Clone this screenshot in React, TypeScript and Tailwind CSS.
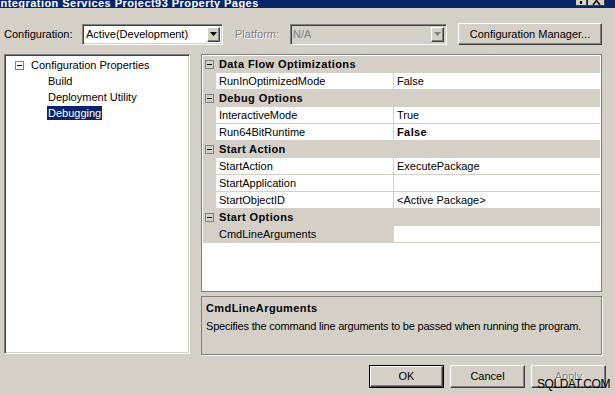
import React from 'react'

const raised =
  'border border-t-white border-l-white border-b-[#404040] border-r-[#404040] shadow-[inset_-1px_-1px_0_#808080]'
const sunken =
  'border border-t-[#808080] border-l-[#808080] border-b-white border-r-white shadow-[inset_1px_1px_0_#404040,inset_-1px_-1px_0_#d4d0c8]'

type Row = { name: string; value: string; bold?: boolean; selected?: boolean }
type Group = { title: string; rows: Row[] }

const groups: Group[] = [
  { title: 'Data Flow Optimizations', rows: [{ name: 'RunInOptimizedMode', value: 'False' }] },
  {
    title: 'Debug Options',
    rows: [
      { name: 'InteractiveMode', value: 'True' },
      { name: 'Run64BitRuntime', value: 'False', bold: true },
    ],
  },
  {
    title: 'Start Action',
    rows: [
      { name: 'StartAction', value: 'ExecutePackage' },
      { name: 'StartApplication', value: '' },
      { name: 'StartObjectID', value: '<Active Package>' },
    ],
  },
  { title: 'Start Options', rows: [{ name: 'CmdLineArguments', value: '', selected: true }] },
]

const MinusBox = ({ white }: { white?: boolean }) => (
  <span
    className={`w-[9px] h-[9px] border border-[#808080] flex items-center justify-center shrink-0 ${
      white ? 'bg-white' : ''
    }`}
  >
    <span className="w-[5px] h-[1px] bg-black" />
  </span>
)

const DropArrow = ({ disabled }: { disabled?: boolean }) => (
  <div className={`w-[13px] h-[15px] bg-[#d4d0c8] flex items-center justify-center ${raised}`}>
    <svg width="7" height="4" viewBox="0 0 7 4">
      <path d="M0 0H7L3.5 4Z" fill={disabled ? '#808080' : '#000'} />
    </svg>
  </div>
)

const Button = ({ label, isDefault, disabled }: { label: string; isDefault?: boolean; disabled?: boolean }) => (
  <div className={`w-[75px] h-[23px] ${isDefault ? 'border border-black' : ''}`}>
    <div
      className={`w-full h-full flex items-center justify-center ${raised} ${
        disabled ? 'text-[#808080] [text-shadow:1px_1px_0_#fff]' : 'text-black'
      }`}
    >
      {label}
    </div>
  </div>
)

export default function App() {
  return (
    <div className="w-[615px] h-[395px] bg-[#d4d0c8] overflow-hidden flex flex-col relative text-[11px] leading-none text-black font-['Liberation_Sans',Arial,sans-serif]">
      {/* title bar, mostly cut off */}
      <div className="h-[8px] bg-[#0a246a] overflow-hidden relative shrink-0">
        <div className="-mt-[2px] -ml-[3px] text-white font-bold text-[11px] leading-[11px] tracking-[0.45px] whitespace-nowrap">
          Integration Services Project93 Property Pages
        </div>
        <div className="absolute top-0 left-[576px] w-[11px] h-[6px] bg-[#d4d0c8] border-r border-b border-[#404040] flex justify-center">
          <span className="w-[2px] h-[3px] bg-black mt-[1px]" />
        </div>
        <div className="absolute top-0 left-[588px] w-[17px] h-[6px] bg-[#d4d0c8] border-r border-b border-[#404040] flex justify-center">
          <svg width="9" height="5" viewBox="0 0 9 5">
            <path d="M1 5L4.5 0.5L8 5" stroke="#000" strokeWidth="1.6" fill="none" />
          </svg>
        </div>
      </div>

      {/* configuration row */}
      <div className="mt-[15px] h-[22px] flex items-center shrink-0">
        <span className="ml-[4px] w-[78px]">Configuration:</span>
        <div className={`w-[141px] h-[21px] bg-white flex items-center pl-[3px] pr-[2px] ${sunken}`}>
          <span className="flex-1">Active(Development)</span>
          <DropArrow />
        </div>
        <span className="ml-[12px] w-[55px] text-[#808080] [text-shadow:1px_1px_0_#fff]">Platform:</span>
        <div className={`w-[157px] h-[21px] bg-[#d4d0c8] flex items-center pl-[2px] pr-[2px] ${sunken}`}>
          <span className="flex-1 text-[#808080]">N/A</span>
          <DropArrow disabled />
        </div>
        <div className={`ml-[11px] w-[144px] h-[22px] flex items-center justify-center ${raised}`}>
          Configuration Manager...
        </div>
      </div>

      {/* main area */}
      <div className="mt-[9px] h-[301px] flex shrink-0">
        <div className={`ml-[4px] w-[186px] h-[300px] bg-white pt-[2px] ${sunken}`}>
          <div className="h-[16px] flex items-center pl-[10px] gap-[7px]">
            <MinusBox white />
            <span>Configuration Properties</span>
          </div>
          <div className="h-[16px] flex items-center pl-[43px]">Build</div>
          <div className="h-[16px] flex items-center pl-[43px]">Deployment Utility</div>
          <div className="h-[16px] flex items-center pl-[42px]">
            <span className="bg-[#0a246a] text-white h-[14px] px-[1px] flex items-center">Debugging</span>
          </div>
        </div>

        <div className="ml-[11px] w-[401px] flex flex-col gap-[4px]">
          {/* property grid */}
          <div className="h-[239px] border border-[#808080] bg-white p-[1px] flex flex-col">
            {groups.map((g) => (
              <div key={g.title}>
                <div className="h-[17px] bg-[#d4d0c8] flex items-center">
                  <span className="w-[13px] flex justify-center">
                    <MinusBox />
                  </span>
                  <span className="pl-[3px] font-bold tracking-[0.4px]">{g.title}</span>
                </div>
                {g.rows.map((r) => (
                  <div key={r.name} className="h-[17px] flex">
                    <div className="w-[13px] bg-[#d4d0c8]" />
                    <div
                      className={`w-[178px] border-r border-b border-[#d4d0c8] flex items-center pl-[3px] ${
                        r.selected ? 'bg-[#d4d0c8]' : 'bg-white'
                      }`}
                    >
                      {r.name}
                    </div>
                    <div
                      className={`flex-1 border-b border-[#d4d0c8] flex items-center pl-[3px] ${
                        r.bold ? 'font-bold tracking-[0.4px]' : ''
                      }`}
                    >
                      {r.value}
                    </div>
                  </div>
                ))}
              </div>
            ))}
          </div>

          {/* description */}
          <div className="h-[59px] border border-[#808080] shadow-[1px_1px_0_#fff] px-[4px] pt-[6px]">
            <div className="font-bold tracking-[0.4px]">CmdLineArguments</div>
            <div className="mt-[7px] whitespace-nowrap tracking-[-0.2px]">
              Specifies the command line arguments to be passed when running the program.
            </div>
          </div>
        </div>
      </div>

      {/* buttons */}
      <div className="mt-[10px] h-[23px] flex justify-end gap-[6px] pr-[9px] shrink-0">
        <Button label="OK" isDefault />
        <Button label="Cancel" />
        <Button label="Apply" disabled />
      </div>

      <div className="absolute left-[537px] top-[378px] text-[12px] leading-none text-black tracking-[-0.4px]">
        SQLDAT.COM
      </div>
    </div>
  )
}
